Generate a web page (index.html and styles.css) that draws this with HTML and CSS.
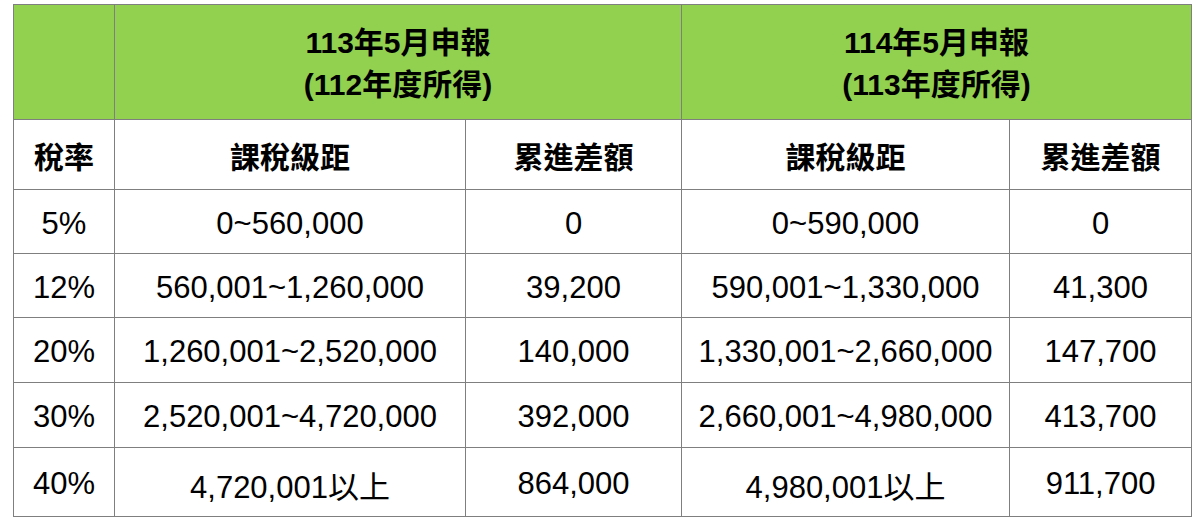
FILE: index.html
```html
<!DOCTYPE html>
<html lang="zh-Hant">
<head>
<meta charset="utf-8">
<link rel="stylesheet" href="styles.css">
</head>
<body>
<table class="tax">
  <colgroup>
    <col class="c-rate">
    <col class="c-range1">
    <col class="c-diff1">
    <col class="c-range2">
    <col class="c-diff2">
  </colgroup>
  <thead>
    <tr class="r-head">
      <th class="green"></th>
      <th class="green" colspan="2">113年5月申報<br>(112年度所得)</th>
      <th class="green" colspan="2">114年5月申報<br>(113年度所得)</th>
    </tr>
    <tr class="r-sub">
      <th>稅率</th>
      <th>課稅級距</th>
      <th>累進差額</th>
      <th>課稅級距</th>
      <th>累進差額</th>
    </tr>
  </thead>
  <tbody>
    <tr class="r-a"><td>5%</td><td>0~560,000</td><td>0</td><td>0~590,000</td><td>0</td></tr>
    <tr class="r-a"><td>12%</td><td>560,001~1,260,000</td><td>39,200</td><td>590,001~1,330,000</td><td>41,300</td></tr>
    <tr class="r-b"><td>20%</td><td>1,260,001~2,520,000</td><td>140,000</td><td>1,330,001~2,660,000</td><td>147,700</td></tr>
    <tr class="r-b"><td>30%</td><td>2,520,001~4,720,000</td><td>392,000</td><td>2,660,001~4,980,000</td><td>413,700</td></tr>
    <tr class="r-d"><td>40%</td><td>4,720,001以上</td><td>864,000</td><td>4,980,001以上</td><td>911,700</td></tr>
  </tbody>
</table>
</body>
</html>
```

FILE: styles.css
```css
html, body {
  margin: 0;
  padding: 0;
  background: #ffffff;
}

body {
  padding: 4px 0 0 13px;
  font-family: "Liberation Sans", "Noto Sans CJK TC", sans-serif;
  color: #000000;
}

.tax {
  border-collapse: collapse;
  table-layout: fixed;
  width: 1178px;
}

.c-rate { width: 101px; }
.c-range1 { width: 351px; }
.c-diff1 { width: 216px; }
.c-range2 { width: 328px; }
.c-diff2 { width: 182px; }

.tax th,
.tax td {
  border: 1px solid #7f7f7f;
  text-align: center;
  vertical-align: middle;
  padding: 0;
  white-space: nowrap;
}

.tax th {
  font-weight: 700;
  font-size: 30px;
}

.tax td {
  font-weight: 400;
  font-size: 31px;
  padding-top: 4px;
}

.tax .green {
  background: #92d050;
  line-height: 42px;
  padding-top: 4px;
}

.r-head { height: 115px; }
.r-sub { height: 70px; }
.r-a { height: 64px; }
.r-b { height: 65px; }
.r-d { height: 69px; }
```
